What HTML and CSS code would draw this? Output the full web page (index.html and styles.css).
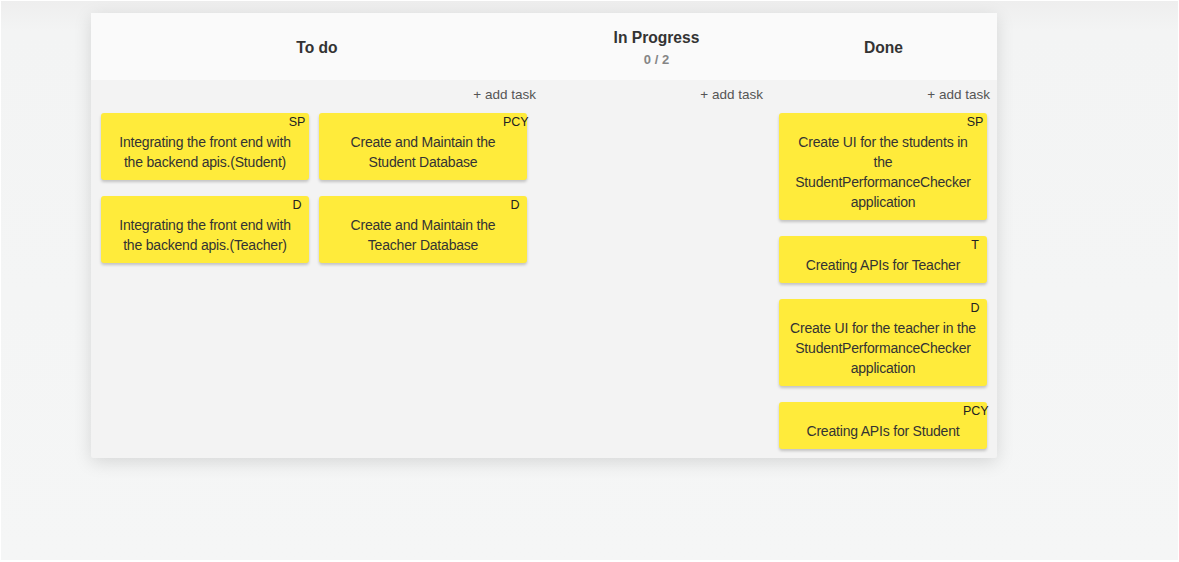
FILE: index.html
```html
<!DOCTYPE html>
<html>
<head>
<meta charset="utf-8">
<link rel="stylesheet" href="styles.css">
</head>
<body>
<div class="board">
  <div class="col-head"><div class="title">To do</div></div>
  <div class="col-head"><div class="title">In Progress</div><div class="count">0 / 2</div></div>
  <div class="col-head"><div class="title">Done</div></div>

  <div class="col-body todo">
    <div class="add">+ add task</div>
    <div class="cards two">
      <div class="card"><div class="label"><span>SP</span></div><div class="text">Integrating the front end with the backend apis.(Student)</div></div>
      <div class="card"><div class="label"><span>PCY</span></div><div class="text">Create and Maintain the Student Database</div></div>
      <div class="card"><div class="label"><span>D</span></div><div class="text">Integrating the front end with the backend apis.(Teacher)</div></div>
      <div class="card"><div class="label"><span>D</span></div><div class="text">Create and Maintain the Teacher Database</div></div>
    </div>
  </div>
  <div class="col-body">
    <div class="add">+ add task</div>
    <div class="cards"></div>
  </div>
  <div class="col-body done">
    <div class="add">+ add task</div>
    <div class="cards">
      <div class="card"><div class="label"><span>SP</span></div><div class="text">Create UI for the students in the StudentPerformanceChecker application</div></div>
      <div class="card"><div class="label"><span>T</span></div><div class="text">Creating APIs for Teacher</div></div>
      <div class="card"><div class="label"><span>D</span></div><div class="text">Create UI for the teacher in the StudentPerformanceChecker application</div></div>
      <div class="card"><div class="label"><span>PCY</span></div><div class="text">Creating APIs for Student</div></div>
    </div>
  </div>
</div>
</body>
</html>
```

FILE: styles.css
```css
html {
  background: #ffffff;
}
body {
  margin: 1px 1px 2px 1px;
  height: 559px;
  box-sizing: border-box;
  padding: 12px 0 0 90px;
  background: linear-gradient(#eeeeee 0px, #f3f4f4 30px, #f5f6f6 100%);
  font-family: "Liberation Sans", Arial, Helvetica, sans-serif;
  color: #333333;
}
.board {
  width: 906px;
  display: grid;
  grid-template-columns: 452px 227px 227px;
  grid-template-rows: 67px auto;
  background: #f3f3f3;
  border-radius: 2px;
  box-shadow: 0 4px 18px rgba(0, 0, 0, 0.13);
}
.col-head {
  background: #fafafa;
  padding-top: 2px;
  display: flex;
  flex-direction: column;
  align-items: center;
  justify-content: center;
}
.title {
  font-size: 15.6px;
  font-weight: bold;
  line-height: 20px;
  color: #333333;
}
.count {
  margin-top: 4px;
  font-size: 13px;
  font-weight: bold;
  line-height: 16px;
  color: #858585;
}
.col-body {
  padding: 0 0 9px 9px;
}
.col-body.todo {
  padding-left: 10px;
}
.add {
  padding: 5px 7px 0 0;
  margin-bottom: 8px;
  line-height: 20px;
  font-size: 13.5px;
  text-align: right;
  color: #555555;
}
.cards {
  display: grid;
  grid-template-columns: 208px;
  row-gap: 16px;
}
.cards.two {
  grid-template-columns: 208px 208px;
  column-gap: 10px;
}
.card {
  background: #ffeb3b;
  border-radius: 3px;
  box-shadow: 0 2px 3px rgba(0, 0, 0, 0.2);
  padding: 1px 0 8px;
}
.label {
  display: flex;
  justify-content: flex-end;
  height: 17px;
}
.label span {
  width: 24px;
  text-align: center;
  font-size: 12.5px;
  line-height: 17px;
  color: #222222;
}
.text {
  margin-top: 1px;
  padding: 0 10px;
  font-size: 14px;
  letter-spacing: -0.2px;
  line-height: 20px;
  text-align: center;
  color: #333333;
}
```
